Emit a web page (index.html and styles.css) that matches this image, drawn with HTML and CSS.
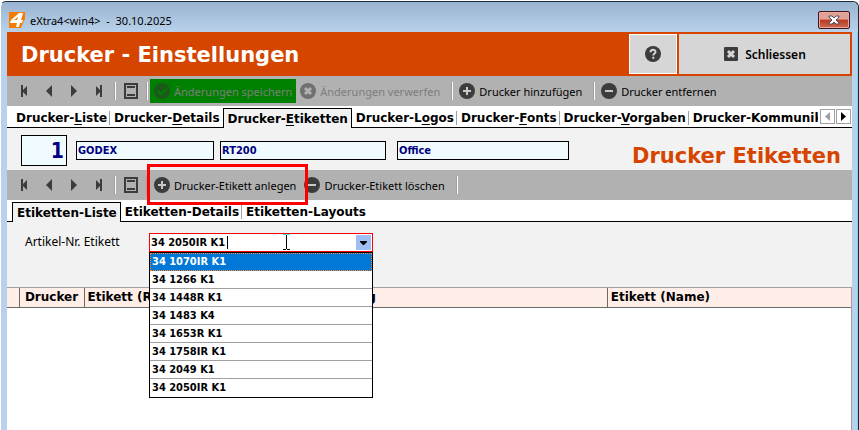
FILE: index.html
```html
<!DOCTYPE html>
<html lang="de">
<head>
    <meta charset="UTF-8">
    <meta name="viewport" content="width=device-width, initial-scale=1.0">
    <title>eXtra4&lt;win4&gt;</title>
    <link rel="stylesheet" href="styles.css">
</head>
<body>
    <!-- shared icons -->
    <svg class="sprite" aria-hidden="true">
        <symbol id="first" viewBox="0 0 16 16"><path d="M5 2h2v5l4-4v10L7 9v5H5z"/></symbol>
        <symbol id="prev" viewBox="0 0 16 16"><path d="M11 2v12L5 8z"/></symbol>
        <symbol id="next" viewBox="0 0 16 16"><path d="M5 2v12l6-6z"/></symbol>
        <symbol id="last" viewBox="0 0 16 16"><path d="M11 2H9v5L5 3v10l4-4v5h2z"/></symbol>
        <symbol id="form" viewBox="0 0 16 16"><path fill-rule="evenodd" d="M1 0h14v16H1zM3 2v12h10V2zM4 3h8v2H4zM4 11h8v2H4z"/></symbol>
        <symbol id="plus" viewBox="0 0 16 16"><circle cx="8" cy="8" r="8"/><path d="M8 4v8M4 8h8" stroke="#c8c8c8" stroke-width="2"/></symbol>
        <symbol id="minus" viewBox="0 0 16 16"><circle cx="8" cy="8" r="8"/><path d="M4 8h8" stroke="#c8c8c8" stroke-width="2"/></symbol>
        <symbol id="check" viewBox="0 0 16 16"><circle cx="8" cy="8" r="8"/><path d="M4 8l3 3 5-5" fill="none" stroke="#008000" stroke-width="2"/></symbol>
        <symbol id="cross" viewBox="0 0 16 16"><circle cx="8" cy="8" r="8"/><path d="M5 5l6 6M11 5l-6 6" stroke="#b1b1b1" stroke-width="3"/></symbol>
    </svg>

    <div class="window">
        <div class="titlebar">
            <svg class="logo" viewBox="0 0 16 16"><path fill="#f57c00" d="M0 0h16v7l-2 4-2 5H0z"/><path fill="#fff" fill-rule="evenodd" d="M10 1h4l-2 7h2l-1 3h-2l-1 4H7l1-4H1l1-3zM9 5L5 8h3z"/></svg>
            <span class="title">eXtra4&lt;win4&gt;&nbsp; -&nbsp; 30.10.2025</span>
            <button class="window-close" aria-label="Fenster schließen">
                <svg viewBox="0 0 12 10"><path d="M1 1h3l2 2 2-2h3v1L8 5l3 3v1H8L6 7 4 9H1V8l3-3-3-3z" fill="#fff" stroke="#4c4c5c"/></svg>
            </button>
        </div>

        <div class="content">
            <div class="header">
                <h1>Drucker - Einstellungen</h1>
                <button class="header-btn help" aria-label="Hilfe">
                    <svg class="icon" viewBox="0 0 16 16"><circle cx="8" cy="8" r="8"/><path d="M5.500 6.200c0-3.400 5-3.200 5-.3 0 1.700-2.200 1.600-2.200 3.600M8.300 10.800v2" fill="none" stroke="#d6d6d6" stroke-width="2"/></svg>
                </button>
                <button class="header-btn close">
                    <svg class="icon" viewBox="0 0 16 16"><rect x="1" y="1" width="14" height="14" rx="1"/><path d="M5 5l6 6M11 5l-6 6" stroke="#d6d6d6" stroke-width="3"/></svg>
                    Schliessen
                </button>
            </div>

            <div class="toolbar">
                <button class="nav-btn" aria-label="Erster"><svg class="icon"><use href="#first"/></svg></button>
                <button class="nav-btn" aria-label="Voriger"><svg class="icon"><use href="#prev"/></svg></button>
                <button class="nav-btn" aria-label="Nächster"><svg class="icon"><use href="#next"/></svg></button>
                <button class="nav-btn" aria-label="Letzter"><svg class="icon"><use href="#last"/></svg></button>
                <span class="sep"></span>
                <button class="nav-btn" aria-label="Formular"><svg class="icon"><use href="#form"/></svg></button>
                <span class="sep"></span>
                <button class="tool-btn save" disabled><svg class="icon"><use href="#check"/></svg>Änderungen speichern</button>
                <button class="tool-btn" disabled><svg class="icon"><use href="#cross"/></svg>Änderungen verwerfen</button>
                <span class="sep"></span>
                <button class="tool-btn"><svg class="icon"><use href="#plus"/></svg>Drucker hinzufügen</button>
                <span class="sep"></span>
                <button class="tool-btn"><svg class="icon"><use href="#minus"/></svg>Drucker entfernen</button>
            </div>

            <div class="tabbar">
                <div class="tabs" role="tablist">
                    <button class="tab" role="tab">Drucker-<u>L</u>iste</button>
                    <button class="tab before" role="tab">Drucker-<u>D</u>etails</button>
                    <button class="tab active" role="tab" aria-selected="true">Drucker-<u>E</u>tiketten</button>
                    <button class="tab" role="tab">Drucker-L<u>o</u>gos</button>
                    <button class="tab" role="tab">Drucker-<u>F</u>onts</button>
                    <button class="tab" role="tab">Drucker-<u>V</u>orgaben</button>
                    <button class="tab last" role="tab">Drucker-Kommunikation</button>
                </div>
                <div class="scroll-btns">
                    <button class="scroll-btn" disabled aria-label="Tabs zurück"><svg viewBox="0 0 13 13"><path d="M9 2v9L4 6.500z"/></svg></button>
                    <button class="scroll-btn" aria-label="Tabs weiter"><svg viewBox="0 0 13 13"><path d="M4 2v9l5-4.500z"/></svg></button>
                </div>
            </div>

            <div class="record">
                <input class="field number" type="text" value="1" aria-label="Nummer">
                <input class="field maker" type="text" value="GODEX" aria-label="Hersteller">
                <input class="field model" type="text" value="RT200" aria-label="Modell">
                <input class="field place" type="text" value="Office" aria-label="Standort">
                <h2>Drucker Etiketten</h2>
            </div>

            <div class="toolbar">
                <button class="nav-btn" aria-label="Erster"><svg class="icon"><use href="#first"/></svg></button>
                <button class="nav-btn" aria-label="Voriger"><svg class="icon"><use href="#prev"/></svg></button>
                <button class="nav-btn" aria-label="Nächster"><svg class="icon"><use href="#next"/></svg></button>
                <button class="nav-btn" aria-label="Letzter"><svg class="icon"><use href="#last"/></svg></button>
                <span class="sep"></span>
                <button class="nav-btn" aria-label="Formular"><svg class="icon"><use href="#form"/></svg></button>
                <span class="sep"></span>
                <button class="tool-btn marked"><svg class="icon"><use href="#plus"/></svg>Drucker-Etikett anlegen</button>
                <button class="tool-btn"><svg class="icon"><use href="#minus"/></svg>Drucker-Etikett löschen</button>
                <span class="sep"></span>
            </div>

            <div class="tabbar">
                <div class="tabs" role="tablist">
                    <button class="tab active" role="tab" aria-selected="true">Etiketten-Liste</button>
                    <button class="tab" role="tab">Etiketten-Details</button>
                    <button class="tab last" role="tab">Etiketten-Layouts</button>
                </div>
            </div>

            <div class="filter">
                <label for="article">Artikel-Nr. Etikett</label>
                <div class="combo">
                    <input id="article" type="text" value="34 2050IR K1" autocomplete="off">
                    <button class="combo-btn" aria-label="Liste öffnen"><svg viewBox="0 0 15 15"><path d="M4 6h7v1l-3 3H7L4 7z"/></svg></button>
                    <span class="caret"></span>
                    <svg class="pointer" viewBox="0 0 7 16"><path d="M3.500 1v14M0 15.500h3M4 15.500h3" stroke="#000"/><path d="M0 .5h3M4 .5h3" stroke="#0ff"/></svg>
                    <ul class="options">
                        <li class="selected">34 1070IR K1</li>
                        <li>34 1266 K1</li>
                        <li>34 1448R K1</li>
                        <li>34 1483 K4</li>
                        <li>34 1653R K1</li>
                        <li>34 1758IR K1</li>
                        <li>34 2049 K1</li>
                        <li>34 2050IR K1</li>
                    </ul>
                </div>
            </div>

            <div class="grid">
                <table>
                    <colgroup>
                        <col class="col-mark">
                        <col class="col-printer">
                        <col class="col-ref">
                        <col class="col-desc">
                        <col>
                    </colgroup>
                    <thead>
                        <tr>
                            <th></th>
                            <th class="center">Drucker</th>
                            <th class="open">Etikett (Ref)</th>
                            <th>Bezeichnung</th>
                            <th>Etikett (Name)</th>
                        </tr>
                    </thead>
                </table>
            </div>
        </div>
    </div>
</body>
</html>
```
FILE: styles.css
```css
* {
    margin: 0;
    padding: 0;
    box-sizing: border-box;
}

body {
    font-family: "DejaVu Sans", Verdana, sans-serif;
    font-size: 12px;
    color: #000;
    background: #fff;
    overflow: hidden;
}

button,
input {
    font: inherit;
    color: inherit;
    border: none;
    background: none;
    border-radius: 0;
}

.sprite {
    position: absolute;
    width: 0;
    height: 0;
}

.icon {
    width: 16px;
    height: 16px;
    flex: none;
    fill: #3c3c3c;
}

/* Window frame */
.window {
    display: flex;
    flex-direction: column;
    min-height: 100vh;
    margin-top: 1px;
    padding: 0 6px;
    background: #b9d1ea;
    border: 1px solid #1c2a33;
    border-left-color: #fff;
    border-bottom: none;
    border-radius: 6px 6px 0 0;
    box-shadow: inset -1px 1px 0 #7fd4ee;
}

.titlebar {
    display: flex;
    align-items: center;
    gap: 5px;
    height: 30px;
    margin: 0 -6px;
    padding: 0 8px;
    border-radius: 6px 6px 0 0;
    background: linear-gradient(#99b4d1, #b9d1ea);
}

.logo {
    width: 16px;
    height: 16px;
    margin-top: 6px;
}

.title {
    flex: 1;
    margin-top: 6px;
    font-family: "Noto Sans", sans-serif;
    font-size: 11px;
}

.window-close {
    display: flex;
    align-items: center;
    justify-content: center;
    width: 32px;
    height: 18px;
    margin-top: 6px;
    border: 1px solid #431422;
    border-radius: 2px;
    box-shadow: inset 0 0 0 1px #e8a89c;
    background: linear-gradient(#e2a196 45%, #b83a22 50%, #cf6a50);
}

.window-close svg {
    width: 12px;
    height: 10px;
}

.content {
    flex: 1;
    display: flex;
    flex-direction: column;
    background: #f2f2f2;
}

/* Header */
.header {
    display: flex;
    gap: 2px;
    height: 44px;
    padding: 2px 2px 2px 14px;
    background: #d64500;
    color: #fff;
}

h1 {
    flex: 1;
    font-size: 21px;
    line-height: 42px;
    white-space: nowrap;
}

.header-btn {
    display: flex;
    align-items: center;
    justify-content: center;
    gap: 6px;
    background: #d6d6d6;
    color: #000;
    font-family: "Noto Sans", sans-serif;
    font-size: 12px;
    font-weight: 600;
}

.help {
    width: 48px;
    border: 1px solid #fff;
}

.close {
    width: 171px;
}

/* Toolbars */
.toolbar {
    display: flex;
    align-items: center;
    height: 30px;
    padding-left: 4px;
    background: #b1b1b1;
}

.nav-btn {
    display: flex;
    align-items: center;
    justify-content: center;
    width: 25px;
    height: 24px;
}

.sep {
    width: 2px;
    height: 18px;
    margin: 0 2px 0 3px;
    border-left: 1px solid #a0a0a0;
    border-right: 1px solid #fff;
}

.tool-btn + .sep {
    margin-left: 7px;
}

.tool-btn {
    display: flex;
    align-items: center;
    gap: 4px;
    height: 24px;
    padding: 0 4px;
    font-family: "Noto Sans", sans-serif;
    font-size: 11px;
    white-space: nowrap;
}

.tool-btn:disabled {
    color: #7d7d7d;
}

.tool-btn:disabled .icon {
    fill: #707070;
}

.tool-btn.save {
    background: #008000;
}

.tool-btn.save .icon {
    fill: #1c5a1c;
}

.marked {
    position: relative;
}

.marked::after {
    content: "";
    position: absolute;
    inset: -9px -8px -8px -3px;
    border: 3px solid #f00;
    z-index: 2;
}

/* Tabs */
.tabbar {
    display: flex;
    height: 22px;
    background: #fff;
    box-shadow: inset 0 -1px 0 #000;
}

.tabs {
    flex: 1;
    display: flex;
    align-items: flex-end;
    min-width: 0;
    padding-left: 5px;
    overflow: hidden;
}

.tab {
    position: relative;
    flex: none;
    height: 20px;
    padding: 0 3px 0 4px;
    font-weight: bold;
    white-space: nowrap;
}

.tab::after {
    content: "";
    position: absolute;
    top: 3px;
    right: 0;
    width: 1px;
    height: 14px;
    background: #a0a0a0;
}

.tab.active {
    border: 1px solid #000;
    border-bottom: none;
    background: #f2f2f2;
}

.tab.active::after,
.tab.before::after,
.tab.last::after {
    display: none;
}

.tab u {
    text-underline-offset: 2px;
}

.scroll-btns {
    display: flex;
    gap: 1px;
    padding: 3px 1px 0 2px;
}

.scroll-btn {
    width: 15px;
    height: 15px;
    border: 1px solid #a0a0a0;
}

.scroll-btn svg {
    display: block;
    width: 13px;
    height: 13px;
}

.scroll-btn:disabled {
    fill: #a0a0a0;
}

/* Current printer */
.record {
    display: flex;
    align-items: center;
    height: 42px;
    padding: 3px 11px 0 14px;
}

.field {
    min-width: 0;
    height: 19px;
    padding: 0 1px;
    border: 1px solid #000;
    background: #f0fbff;
    color: #000080;
    font-family: "DejaVu Sans Condensed", "DejaVu Sans", Tahoma, sans-serif;
    font-size: 11px;
    font-weight: bold;
}

.field.number {
    flex: none;
    width: 46px;
    height: 31px;
    margin-right: 9px;
    padding-right: 2px;
    font-size: 21px;
    text-align: right;
}

.field.maker {
    width: 138px;
    margin-right: 6px;
}

.field.model {
    width: 166px;
    margin-right: 11px;
}

.field.place {
    width: 172px;
}

h2 {
    flex: 1;
    padding-top: 10px;
    color: #d64500;
    font-size: 21px;
    line-height: 26px;
    text-align: right;
    white-space: nowrap;
}

/* Article filter */
.filter {
    display: flex;
    align-items: flex-start;
    height: 65px;
    padding: 11px 18px;
}

.filter label {
    width: 124px;
    line-height: 18px;
    font-family: "Noto Sans", sans-serif;
}

.combo {
    position: relative;
    display: flex;
    width: 224px;
    height: 19px;
    border: 1px solid #f00;
    background: #fff;
    font-family: "DejaVu Sans Condensed", "DejaVu Sans", Tahoma, sans-serif;
    font-size: 11px;
    font-weight: bold;
}

.combo input {
    flex: 1;
    min-width: 0;
    padding-left: 1px;
    outline: none;
}

.combo-btn {
    width: 15px;
    height: 15px;
    margin: 1px;
    background: #9ebef5;
}

.combo-btn svg {
    display: block;
}

.caret {
    position: absolute;
    top: 2px;
    left: 77px;
    width: 1px;
    height: 13px;
    background: #000;
}

.pointer {
    position: absolute;
    top: 0;
    left: 133px;
    width: 7px;
    height: 16px;
}

.options {
    position: absolute;
    top: 18px;
    left: -1px;
    right: -1px;
    z-index: 1;
    border: 1px solid #000;
    background: #fff;
    list-style: none;
}

.options li {
    height: 18px;
    padding: 0 2px;
    border-bottom: 1px solid #a0a0a0;
    line-height: 18px;
}

.options li:last-child {
    border-bottom: none;
}

.options .selected {
    padding: 0 1px;
    border: 1px dotted #ff8728;
    background: #0078d7;
    color: #fff;
    line-height: 16px;
}

/* Label table */
.grid {
    flex: 1;
    border-top: 1px solid #a0a0a0;
    border-right: 1px solid #a0a0a0;
    background: #fff;
}

table {
    width: 100%;
    table-layout: fixed;
    border-collapse: collapse;
}

th {
    height: 19px;
    padding: 0 3px;
    background: #ffeee8;
    border-bottom: 1px solid #696969;
    border-right: 1px solid #696969;
    text-align: left;
    white-space: nowrap;
}

th:last-child,
th.open {
    border-right: none;
}

th.center {
    text-align: center;
}

.col-mark {
    width: 12px;
}

.col-printer {
    width: 65px;
}

.col-ref {
    width: 24%;
}

.col-desc {
    width: 38%;
}
```
